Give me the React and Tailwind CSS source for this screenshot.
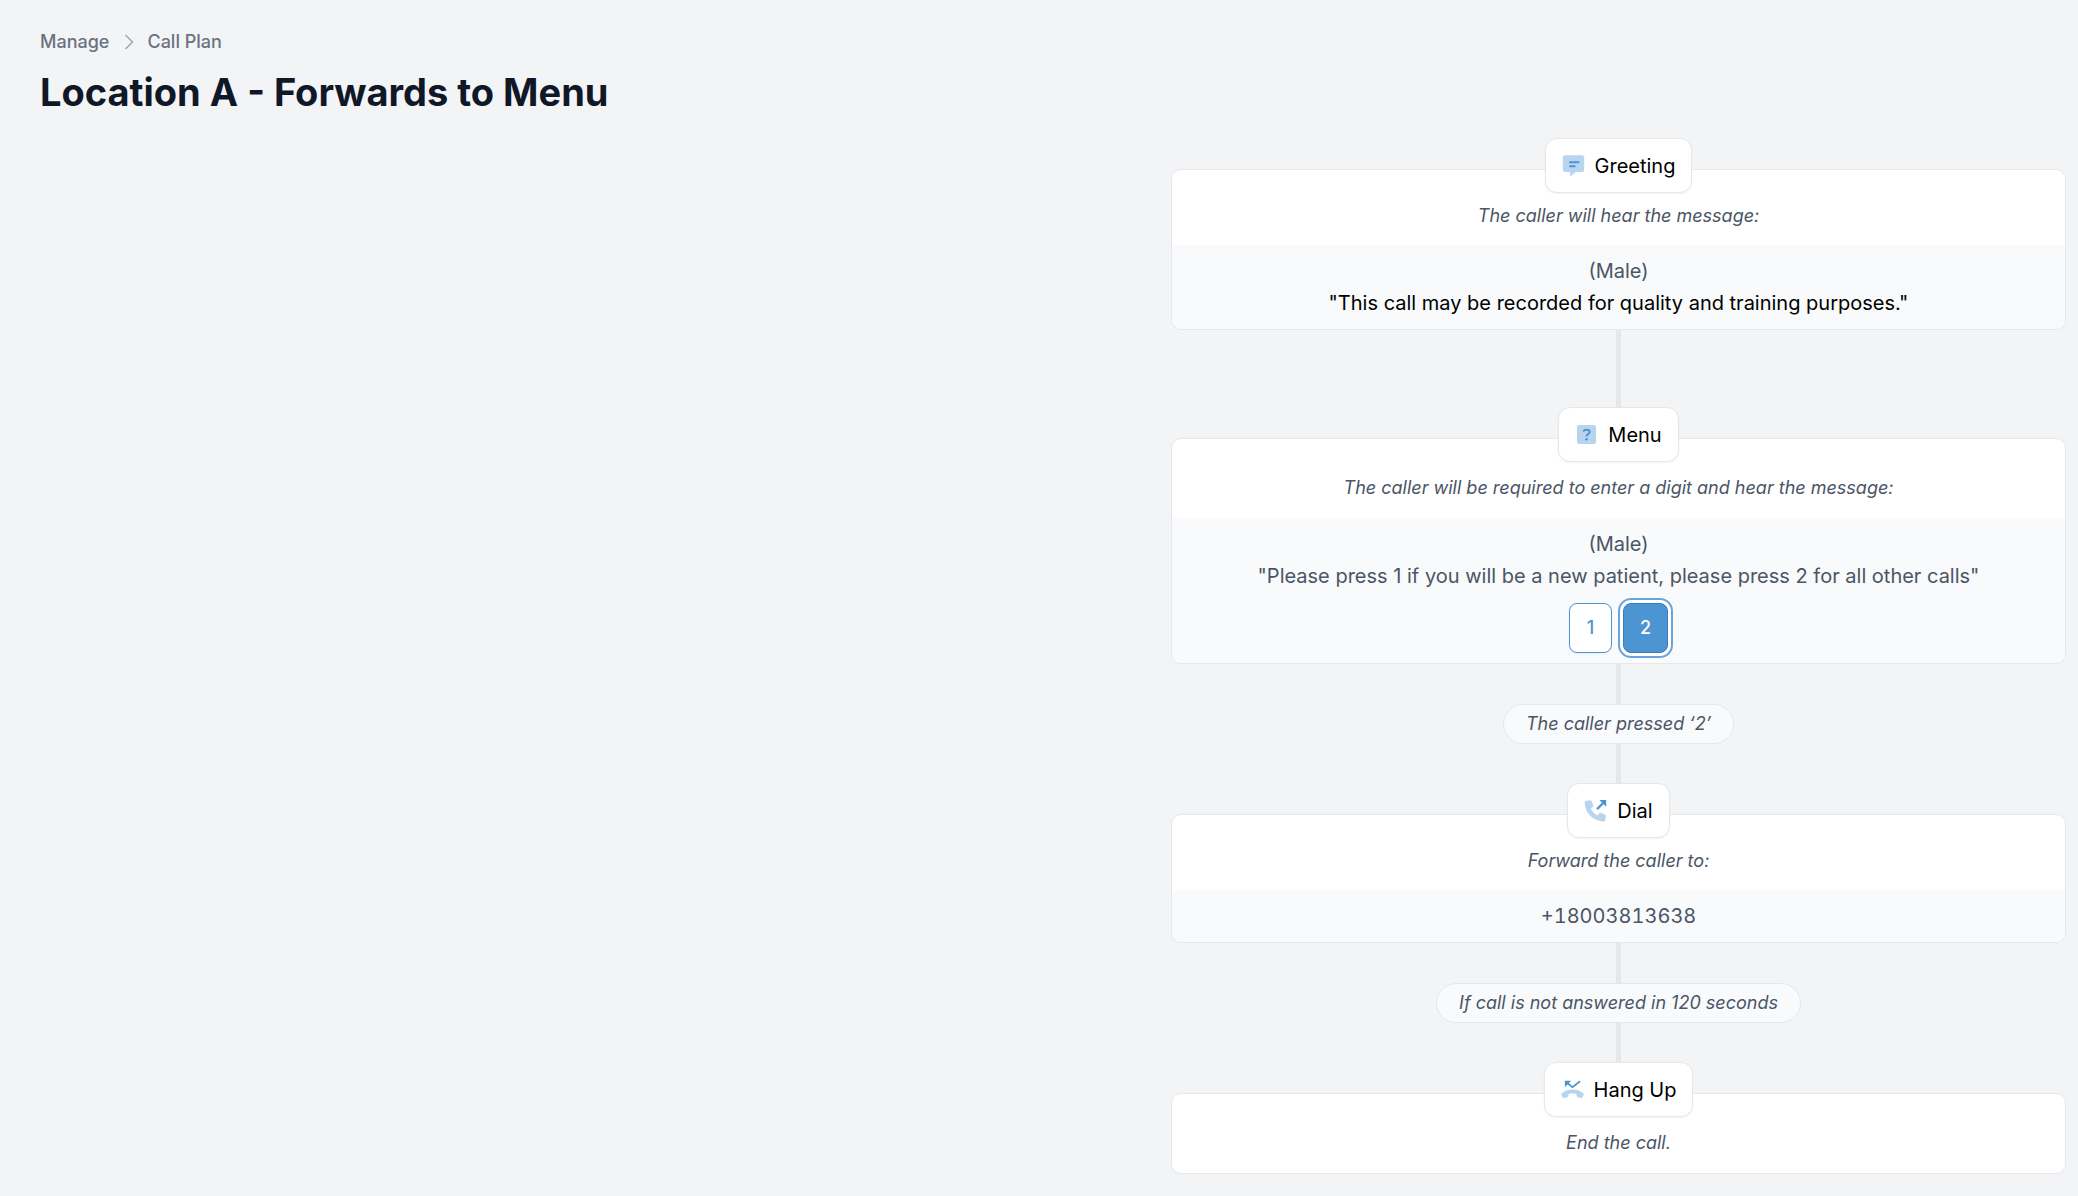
import React from "react";

const GreetingIcon = () => (
  <svg viewBox="0 0 24 24" className="w-[27px] h-[27px]" aria-hidden="true">
    <path
      fill="#b8d5f0"
      d="M4.500 2.800h15a2 2 0 0 1 2 2v11a2 2 0 0 1-2 2H14L9 21.700v-3.900H4.500a2 2 0 0 1-2-2V4.800a2 2 0 0 1 2-2z"
    />
    <rect x="8" y="8.300" width="9.400" height="1.800" rx=".9" fill="#4d94d3" />
    <rect x="8" y="11.800" width="6" height="1.800" rx=".9" fill="#4d94d3" />
  </svg>
);

const MenuIcon = () => (
  <svg viewBox="0 0 24 24" className="w-[27px] h-[27px]" aria-hidden="true">
    <rect x="3.500" y="3.500" width="17" height="17" rx="2" fill="#b8d5f0" />
    <path
      d="M9.300 9.500c.2-1.100 1.200-1.800 2.700-1.800 1.700 0 2.800.8 2.800 2 0 1.900-2.800 1.900-2.800 4.100"
      fill="none"
      stroke="#4d94d3"
      strokeWidth="1.800"
    />
    <circle cx="12" cy="16.200" r="1.200" fill="#4d94d3" />
  </svg>
);

const DialIcon = () => (
  <svg viewBox="0 0 24 24" className="w-[27px] h-[27px]" aria-hidden="true">
    <path
      fill="#b8d5f0"
      d="M3.300 3.600 7.200 2.800c.5-.1 1 .2 1.200.7l1.700 3.900c.2.500.1 1-.3 1.300L7.700 10.400a13.700 13.700 0 0 0 6 6l1.700-2.100c.3-.4.8-.5 1.300-.3l3.900 1.700c.5.2.8.7.7 1.200l-.8 3.900c-.1.500-.5.900-1.100.9C10.100 21.700 2.400 14 2.400 4.700c0-.5.4-1 .9-1.100z"
    />
    <path d="M13.400 10.800 19.500 4.700" stroke="#4d94d3" strokeWidth="2" fill="none" />
    <path d="M15.500 2.700h6v6l-1.900-1.900-2.200-2.200z" fill="#4d94d3" />
  </svg>
);

const HangUpIcon = () => (
  <svg viewBox="0 0 24 24" className="w-[27px] h-[27px]" aria-hidden="true">
    <path
      fill="#b8d5f0"
      d="M12 12.100c3.700 0 7 1 9.300 3.100.8.700.8 1.600.4 2.300l-.9 1.400c-.3.600-1 .9-1.700.7l-2.700-.9c-.6-.2-1-.8-.9-1.500l.1-1.300a12 12 0 0 0-7.200 0l.1 1.300c.1.700-.3 1.300-.9 1.500l-2.700.9c-.7.200-1.400-.1-1.700-.7l-.9-1.400c-.4-.7-.4-1.600.4-2.300 2.300-2.100 5.600-3.100 9.300-3.100z"
    />
    <path d="M6.800 5.800 12 9.900l6.700-5.200" stroke="#4d94d3" strokeWidth="1.600" fill="none" />
    <path d="M5.200 4.300h5.600L5.200 10.100z" fill="#4d94d3" />
  </svg>
);

const Connector = ({ children }) => (
  <div className="flex flex-col items-center">
    {children ? (
      <>
        <div className="w-[5px] h-10 bg-gray-200" />
        <div className="rounded-full border border-gray-200 bg-gray-50 px-[22px] py-[5px] text-lg leading-7 italic text-gray-600">
          {children}
        </div>
        <div className="w-[5px] h-[39px] bg-gray-200" />
      </>
    ) : (
      <div className="w-[5px] h-[77px] bg-gray-200" />
    )}
  </div>
);

const Step = ({ icon, title, description, roomy, children }) => (
  <section className="flex flex-col items-center">
    <h2 className="z-10 -mb-6 flex h-[55px] items-center gap-2 rounded-xl border border-gray-200 bg-white pr-4 pl-[14px] text-xl text-black shadow-xs">
      {icon}
      {title}
    </h2>
    <div className="w-full overflow-hidden rounded-[10px] border border-gray-200 bg-white text-center">
      <p
        className={
          roomy
            ? "px-4 pt-[35px] pb-4 text-lg leading-7 italic text-gray-600"
            : "px-4 pt-8 pb-[15px] text-lg leading-7 italic text-gray-600"
        }
      >
        {description}
      </p>
      {children && (
        <div className="bg-gray-50 px-4 py-[10px] text-xl leading-8 text-gray-600">
          {children}
        </div>
      )}
    </div>
  </section>
);

export default function App() {
  return (
    <div className="min-h-screen bg-gray-100 pb-4 font-['Inter',sans-serif]">
      <header className="px-10 pt-7">
        <nav aria-label="Breadcrumb">
          <ol className="flex items-center gap-3 text-lg leading-7 font-medium text-gray-500">
            <li>
              <a href="#manage">Manage</a>
            </li>
            <li className="flex items-center gap-3">
              <svg viewBox="0 0 14 20" className="w-[14px] h-5" aria-hidden="true">
                <path d="M4.500 3l7 7-7 7" fill="none" stroke="#9ca3af" strokeWidth="1.400" />
              </svg>
              <a href="#call-plan">Call Plan</a>
            </li>
          </ol>
        </nav>
        <h1 className="mt-3 text-[38px] leading-12 font-bold text-gray-900">
          Location A - Forwards to Menu
        </h1>
      </header>

      <main className="mt-[22px] mr-3 ml-auto max-w-[895px]">
        <Step
          icon={<GreetingIcon />}
          title="Greeting"
          description="The caller will hear the message:"
        >
          <p>(Male)</p>
          <p className="text-black">
            "This call may be recorded for quality and training purposes."
          </p>
        </Step>
        <Connector />
        <Step
          icon={<MenuIcon />}
          title="Menu"
          description="The caller will be required to enter a digit and hear the message:"
          roomy
        >
          <p>(Male)</p>
          <p>
            "Please press 1 if you will be a new patient, please press 2 for all
            other calls"
          </p>
          <div className="mt-[11px] flex justify-center gap-[11px]">
            <button
              type="button"
              className="h-[50px] w-[43px] rounded-lg border border-[#4d94d3] bg-white text-lg font-medium text-[#4d94d3] shadow-xs"
            >
              1
            </button>
            <button
              type="button"
              aria-pressed="true"
              className="h-[50px] w-[45px] rounded-lg border border-[#3a7cb8] bg-[#4d94d3] text-lg font-medium text-white ring-2 ring-[#67a6dc] ring-offset-3"
            >
              2
            </button>
          </div>
        </Step>
        <Connector>The caller pressed ‘2’</Connector>
        <Step
          icon={<DialIcon />}
          title="Dial"
          description="Forward the caller to:"
        >
          <p className="tabular-nums">+18003813638</p>
        </Step>
        <Connector>If call is not answered in 120 seconds</Connector>
        <Step
          icon={<HangUpIcon />}
          title="Hang Up"
          description="End the call."
          roomy
        />
      </main>
    </div>
  );
}
